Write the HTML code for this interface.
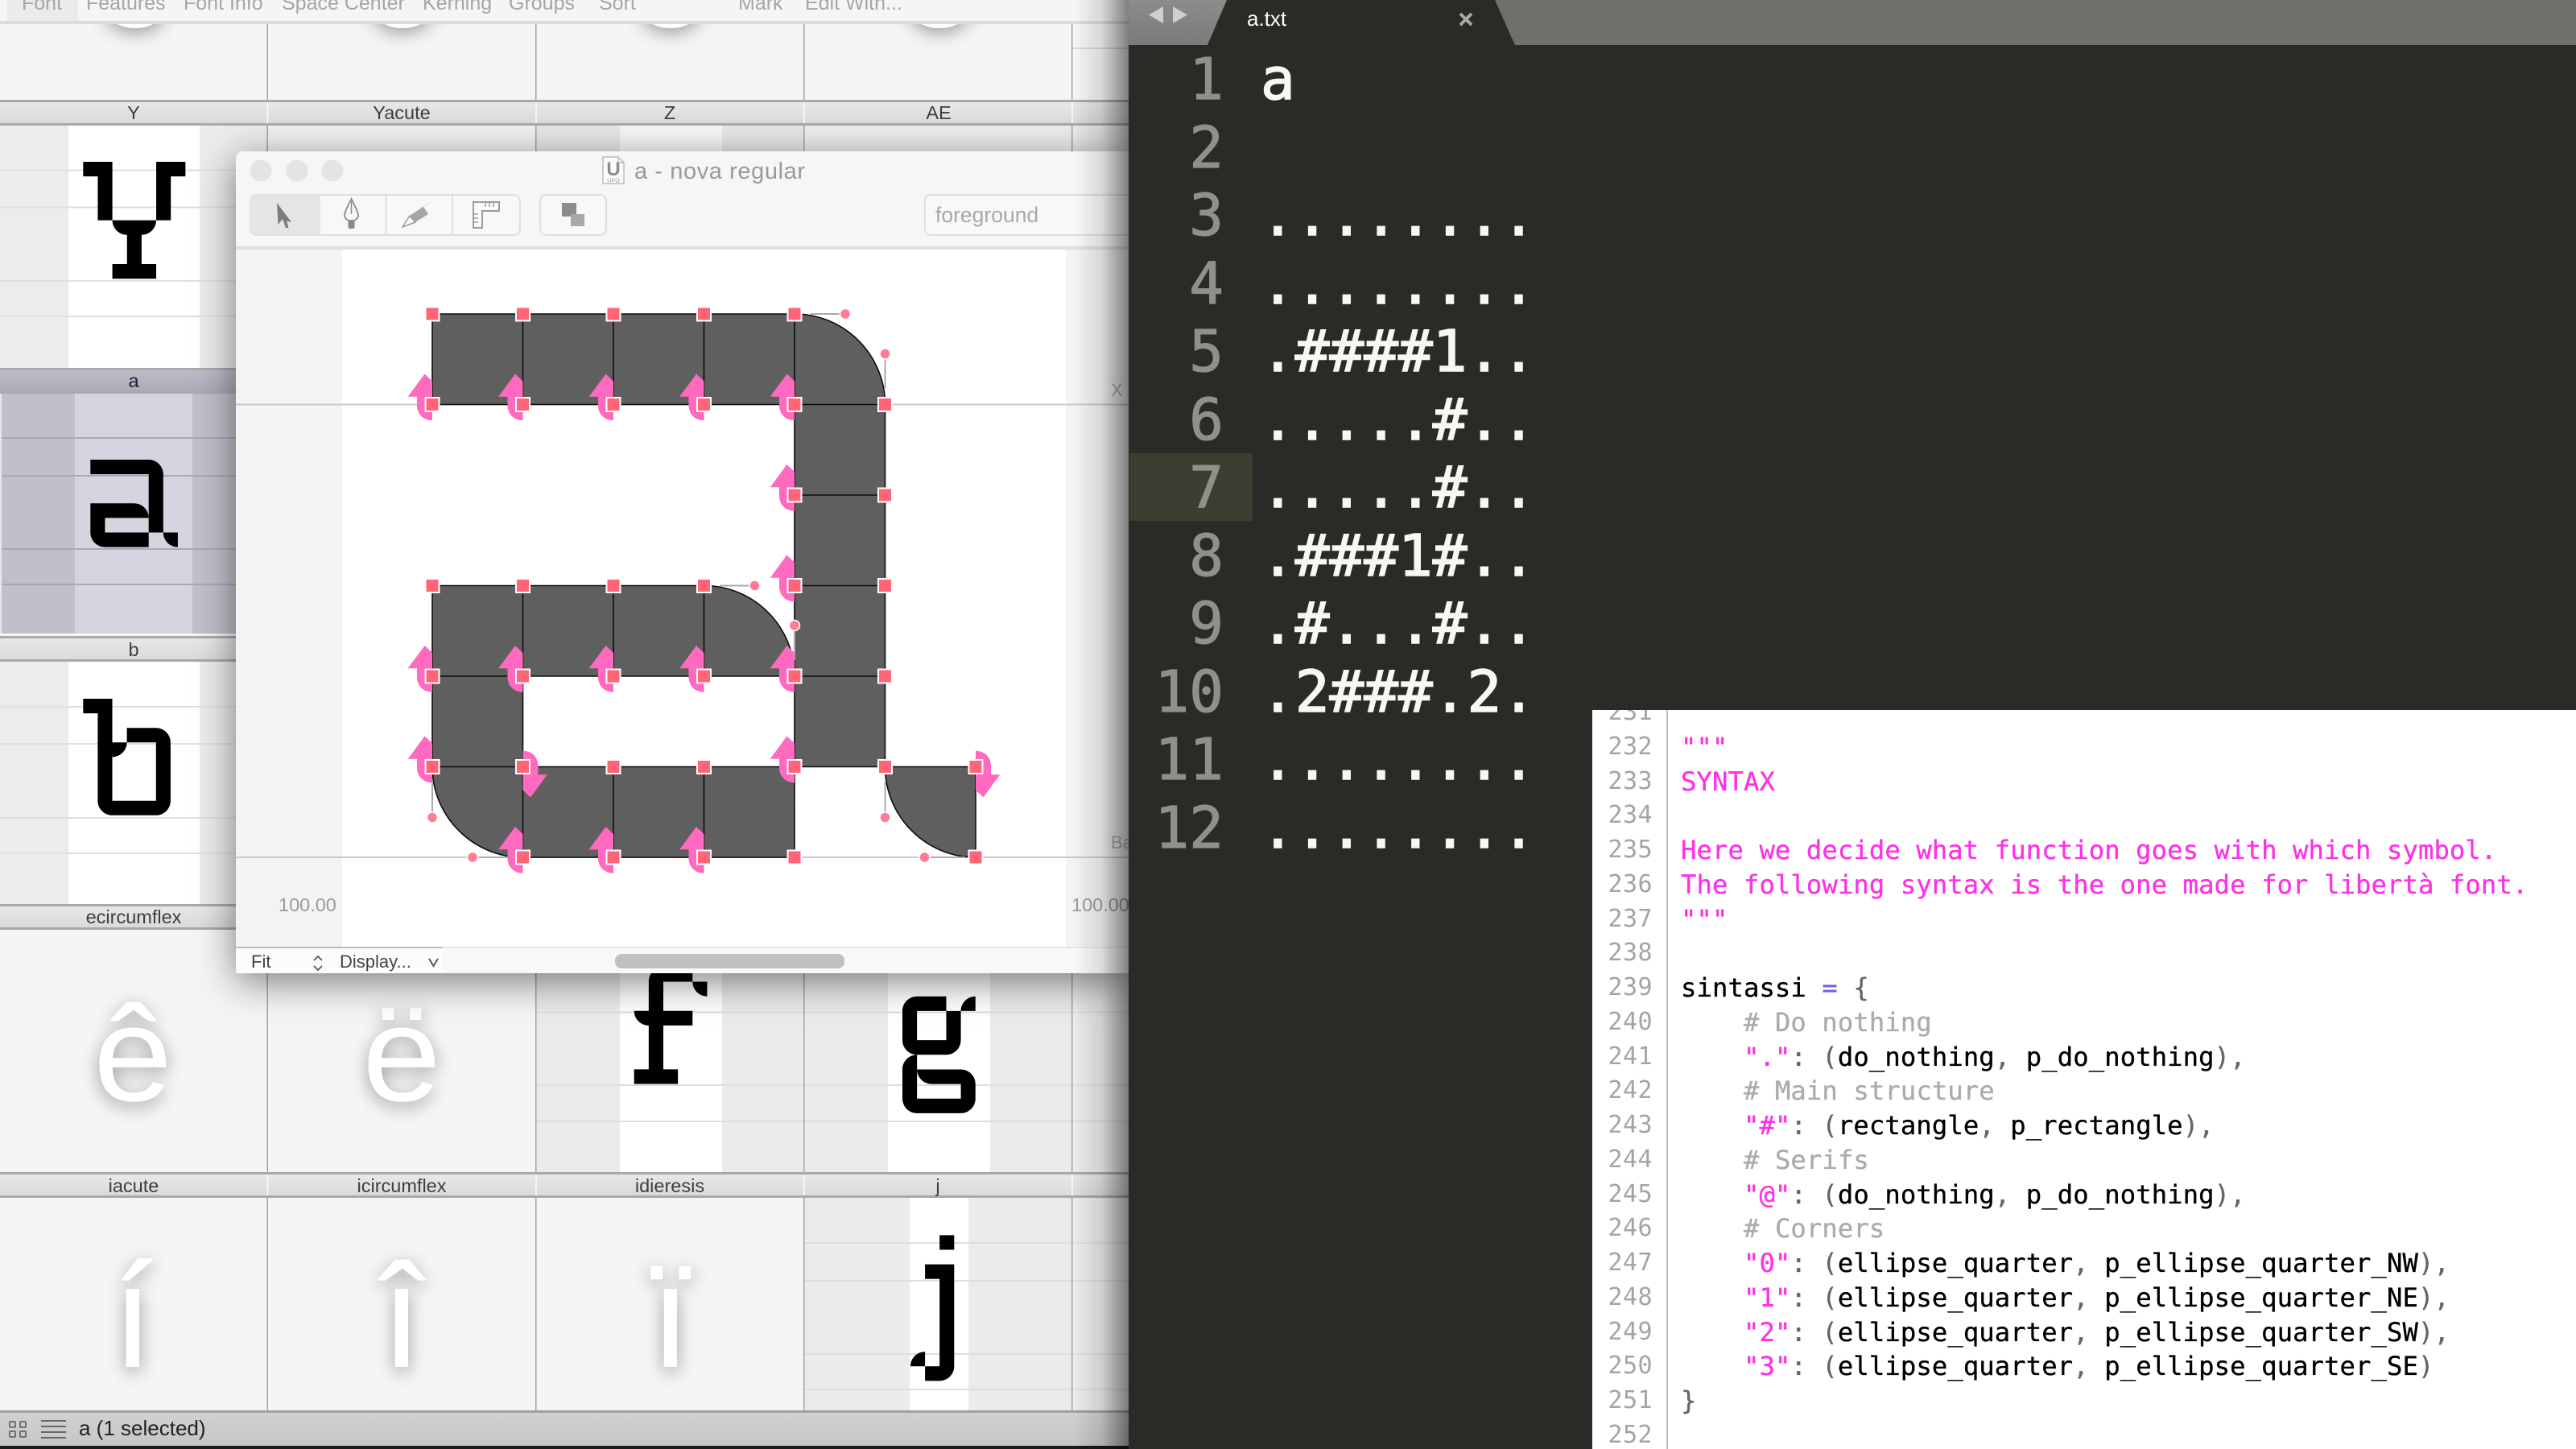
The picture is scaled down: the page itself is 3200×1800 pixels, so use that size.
<!DOCTYPE html>
<html><head><meta charset="utf-8"><title>a - nova regular</title>
<style>
html,body{margin:0;padding:0;width:3200px;height:1800px;overflow:hidden;background:#2a2b26}
svg{position:absolute;display:block}
text{font-family:"Liberation Sans",sans-serif}
#ed{position:absolute;left:1402px;top:0;width:1798px;height:1800px;background:#2a2b26;overflow:hidden}
.big{position:absolute;top:57px;margin:0;font:71px/84.5px "DejaVu Sans Mono",monospace;white-space:pre}
#hl{position:absolute;left:1px;top:563px;width:153px;height:84px;background:#3e3d32}
#nums{left:0;width:118px;text-align:right;color:#8f908a;-webkit-text-stroke:1.2px #8f908a}
#code{left:164px;color:#f8f8f2;-webkit-text-stroke:1.6px #f8f8f2}
#win{position:absolute;left:1978px;top:882px;width:1222px;height:918px;background:#fff;overflow:hidden}
#gut{position:absolute;left:0;top:-18px;width:75px;margin:0;text-align:right;font:30px/42.75px "DejaVu Sans Mono",monospace;letter-spacing:.44px;color:#a4a4a4;white-space:pre}
#bar{position:absolute;left:92px;top:0;width:2px;height:918px;background:#bdbdbd}
#src{position:absolute;left:110px;top:-18px;margin:0;font:32.2px/42.75px "DejaVu Sans Mono",monospace;letter-spacing:.11px;-webkit-text-stroke:.35px;color:#000;white-space:pre}
.s{color:#ff30e6}.c{color:#ababab}.p{color:#666}.q{color:#7a5fe0}
</style></head><body>
<svg width="1402" height="1800" viewBox="0 0 1402 1800" style="left:0;top:0">
<defs>
<filter id="ws" x="-20%" y="-20%" width="140%" height="140%"><feDropShadow dx="0" dy="10" stdDeviation="24" flood-color="#000" flood-opacity=".5"/></filter>
<filter id="gs" x="-60%" y="-60%" width="220%" height="220%"><feDropShadow dx="0" dy="6" stdDeviation="11" flood-color="#000" flood-opacity=".36"/></filter>
<linearGradient id="hd" x1="0" y1="0" x2="0" y2="1"><stop offset="0" stop-color="#e9e9e9"/><stop offset="1" stop-color="#d9d9d9"/></linearGradient>
<linearGradient id="hs" x1="0" y1="0" x2="0" y2="1"><stop offset="0" stop-color="#bcbcc7"/><stop offset="1" stop-color="#acacb9"/></linearGradient>
<linearGradient id="st" x1="0" y1="0" x2="0" y2="1"><stop offset="0" stop-color="#d2d2d2"/><stop offset="1" stop-color="#c6c6c6"/></linearGradient>
<linearGradient id="rs" x1="0" y1="0" x2="1" y2="0"><stop offset="0" stop-color="#000" stop-opacity="0"/><stop offset=".5" stop-color="#000" stop-opacity=".12"/><stop offset="1" stop-color="#000" stop-opacity=".48"/></linearGradient>
<g id="n"><rect x="-8.5" y="-8.5" width="17" height="17" fill="#ff6478" stroke="#fff" stroke-width="2"/></g>
<path id="ar" fill="#ff69c0" d="M-9.5-38L-30.3-9.7H-19V1C-19 12-11 19.7 0 19.7V-29z"/>
<g id="hdr"><rect width="1402" height="32" fill="url(#hd)"/><rect width="1402" height="3" fill="#a9a9a9"/><rect y="29" width="1402" height="3" fill="#a9a9a9"/></g>
</defs>

<!-- font overview background -->
<rect width="1402" height="1800" fill="#f5f5f5"/>

<!-- row 0 blobs -->
<g fill="#fff" filter="url(#gs)">
<ellipse cx="168" cy="8" rx="38" ry="27"/><ellipse cx="500" cy="8" rx="38" ry="27"/><ellipse cx="833" cy="8" rx="38" ry="27"/><ellipse cx="1167" cy="8" rx="38" ry="27"/>
</g>
<rect x="1333" y="59" width="69" height="2" fill="#d8d8d8"/>

<!-- top toolbar -->
<rect width="1402" height="27" fill="#f5f5f5"/>
<rect x="9" width="88" height="27" fill="#ebebeb"/>
<rect y="26" width="1402" height="4" fill="#dcdcdc"/>
<g font-size="25" fill="#a6a6a6">
<text x="27" y="12">Font</text><text x="107" y="12">Features</text><text x="228" y="12">Font Info</text><text x="350" y="12">Space Center</text><text x="525" y="12">Kerning</text><text x="632" y="12">Groups</text><text x="744" y="12">Sort</text><text x="917" y="12">Mark</text><text x="1000" y="12">Edit With...</text>
</g>

<!-- row 1 cells -->
<rect y="156" width="1402" height="301" fill="#ececec"/>
<rect x="85" y="156" width="163" height="301" fill="#fff"/>
<rect x="333" y="156" width="332" height="32" fill="#f1f1f1"/>
<rect x="666" y="156" width="332" height="32" fill="#e8e8e8"/>
<rect x="770" y="156" width="127" height="32" fill="#f8f8f8"/>
<rect x="999" y="156" width="332" height="32" fill="#eeeeee"/>
<g fill="#dfdfdf"><rect y="210.500" width="332" height="2"/><rect y="256.500" width="332" height="2"/><rect y="348" width="332" height="2"/><rect y="392" width="332" height="2"/></g>
<path transform="translate(103.300 201) scale(18.150)" d="M0 0h2v1h-2zM5 0h2v1h-2zM1 1h1v3h-1zM5 1h1v3h-1zM2 4c0 .55 .45 1 1 1v-1zM3 4h1v1h-1zM5 4c0 .55-.45 1-1 1v-1zM3 5h1v2h-1zM2 7h3v1h-3z"/>

<!-- row 2 a selected -->
<rect y="489" width="332" height="298" fill="#c0c0ca"/>
<rect x="93" y="489" width="146" height="298" fill="#d5d5df"/>
<g fill="#a9a9b5"><rect y="543" width="332" height="2"/><rect y="590" width="332" height="2"/><rect y="681" width="332" height="2"/><rect y="725" width="332" height="2"/></g>
<path transform="translate(112.300 571) scale(18.100)" d="M0 0h4v1h-4zM4 0c.55 0 1 .45 1 1h-1zM4 1h1v4h-1zM0 3h3v1h-3zM3 3c.55 0 1 .45 1 1h-1zM0 4h1v1h-1zM0 5c0 .55 .45 1 1 1v-1zM1 5h3v1h-3zM5 5c0 .55 .45 1 1 1v-1z"/>
<rect y="489" width="2" height="298" fill="#e8e8ec"/>

<!-- row 3 b -->
<rect y="822" width="332" height="301" fill="#ececec"/>
<rect x="85" y="822" width="163" height="301" fill="#fff"/>
<g fill="#dfdfdf"><rect y="877" width="332" height="2"/><rect y="923" width="332" height="2"/><rect y="1015" width="332" height="2"/><rect y="1059" width="332" height="2"/></g>
<path transform="translate(103.300 868) scale(18.100)" d="M0 0h2v1h-2zM1 1h1v6h-1zM3 2h2v1h-2zM5 2c.55 0 1 .45 1 1h-1zM3 3c0 .55-.45 1-1 1v-1zM5 3h1v4h-1zM1 7c0 .55 .45 1 1 1v-1zM2 7h3v1h-3zM6 7c0 .55-.45 1-1 1v-1z"/>

<!-- row 4 -->
<rect x="666" y="1155" width="736" height="301" fill="#ebebeb"/>
<rect x="770" y="1155" width="127" height="301" fill="#fff"/>
<rect x="1103" y="1155" width="127" height="301" fill="#fff"/>
<g fill="#dedede"><rect x="666" y="1256.500" width="736" height="2"/><rect x="666" y="1347" width="736" height="2"/><rect x="666" y="1392" width="736" height="2"/></g>
<path transform="translate(787.700 1201.300) scale(18.150)" d="M2 0c-.55 0-1 .45-1 1h1zM2 0h2v1h-2zM1 1h1v2h-1zM4 1c0 .55 .45 1 1 1v-1zM0 3c0 .55 .45 1 1 1v-1zM1 3h3v1h-3zM1 4h1v3h-1zM0 7h3v1h-3z"/>
<path transform="translate(1121 1237.700) scale(18.150)" d="M1 0c-.55 0-1 .45-1 1h1zM1 0h2v1h-2zM5 0c-.55 0-1 .45-1 1h1zM0 1h1v2h-1zM3 1h1v2h-1zM0 3c0 .55 .45 1 1 1v-1zM1 3h2v1h-2zM4 3c0 .55-.45 1-1 1v-1zM1 4c-.55 0-1 .45-1 1h1zM0 5h1v2h-1zM1 5c0 .55 .45 1 1 1v-1zM2 5h2v1h-2zM4 5c.55 0 1 .45 1 1h-1zM4 6h1v1h-1zM0 7c0 .55 .45 1 1 1v-1zM1 7h3v1h-3zM5 7c0 .55-.45 1-1 1v-1z"/>

<!-- row 5 -->
<rect x="999" y="1488" width="403" height="264" fill="#ebebeb"/>
<rect x="1130" y="1488" width="73" height="264" fill="#fff"/>
<g fill="#dedede"><rect x="999" y="1543" width="403" height="2"/><rect x="999" y="1590" width="403" height="2"/><rect x="999" y="1681" width="403" height="2"/><rect x="999" y="1725" width="403" height="2"/></g>
<path transform="translate(1131 1534.400) scale(18.100)" d="M2 0h1v1h-1zM1 2h2v1h-2zM2 3h1v6h-1zM1 8c-.55 0-1 .45-1 1h1zM1 9h1v1h-1zM3 9c0 .55-.45 1-1 1v-1z"/>

<!-- column lines -->
<g fill="#a3a3a3">
<rect x="331.500" y="30" width="1.500" height="1722"/><rect x="665" y="30" width="1.500" height="1722"/><rect x="998" y="30" width="1.500" height="1722"/><rect x="1331" y="30" width="1.500" height="1722"/>
</g>

<!-- headers -->
<use href="#hdr" y="124"/><use href="#hdr" y="457"/><use href="#hdr" y="790"/><use href="#hdr" y="1123"/><use href="#hdr" y="1456"/>
<rect y="460" width="332" height="26" fill="url(#hs)"/>
<g fill="#fafafa" opacity=".8">
<rect x="331.500" y="127" width="2" height="26"/><rect x="665" y="127" width="2" height="26"/><rect x="998" y="127" width="2" height="26"/><rect x="1331" y="127" width="2" height="26"/>
<rect x="331.500" y="1459" width="2" height="26"/><rect x="665" y="1459" width="2" height="26"/><rect x="998" y="1459" width="2" height="26"/><rect x="1331" y="1459" width="2" height="26"/>
</g>
<g font-size="23.500" fill="#3d3d46" text-anchor="middle">
<text x="166" y="148">Y</text><text x="499" y="148">Yacute</text><text x="832" y="148">Z</text><text x="1166" y="148">AE</text>
<text x="166" y="481" fill="#1e1e32">a</text>
<text x="166" y="815">b</text>
<text x="166" y="1147">ecircumflex</text>
<text x="166" y="1481">iacute</text><text x="499" y="1481">icircumflex</text><text x="832" y="1481">idieresis</text><text x="1165" y="1481">j</text>
</g>

<!-- white accented glyphs -->
<g fill="#fff" text-anchor="middle" filter="url(#gs)">
<text transform="translate(165 1367) scale(1.1 1.05)" font-size="160">ê</text>
<text transform="translate(499 1367) scale(1.1 1.05)" font-size="160">ë</text>
<text x="165" y="1698" font-size="183">í</text>
<text x="499" y="1698" font-size="183">î</text>
<text x="833" y="1698" font-size="183">ï</text>
</g>

<!-- status bar -->
<rect y="1752" width="1402" height="44" fill="url(#st)"/>
<rect y="1752" width="1402" height="3" fill="#a0a0a0"/>
<rect y="1796" width="1402" height="4" fill="#1a1a1a"/>
<g fill="none" stroke="#666" stroke-width="1.800">
<rect x="12" y="1766" width="7" height="7" rx="1"/><rect x="25" y="1766" width="7" height="7" rx="1"/><rect x="12" y="1778" width="7" height="7" rx="1"/><rect x="25" y="1778" width="7" height="7" rx="1"/>
</g>
<g fill="#666"><rect x="51" y="1764" width="31" height="2"/><rect x="51" y="1771" width="31" height="2"/><rect x="51" y="1778" width="31" height="2"/><rect x="51" y="1785" width="31" height="2"/></g>
<text x="98" y="1783" font-size="26" fill="#222">a (1 selected)</text>

<!-- glyph window -->
<g filter="url(#ws)">
<path d="M303 188H1402V1209H303q-10 0-10-10V198q0-10 10-10z" fill="#f6f6f6"/>
</g>
<circle cx="324" cy="212" r="13.500" fill="#e4e4e4"/><circle cx="369" cy="212" r="13.500" fill="#e4e4e4"/><circle cx="413" cy="212" r="13.500" fill="#e4e4e4"/>

<!-- UFO doc icon + title -->
<path d="M749 195h19l7 7v26h-26z" fill="#fbfbfb" stroke="#bbb" stroke-width="1.500"/>
<path d="M768 195v7h7" fill="none" stroke="#bbb" stroke-width="1.500"/>
<text x="762" y="218" font-size="24" font-weight="bold" fill="#8c8c8c" text-anchor="middle">U</text>
<text x="762" y="226.500" font-size="7.500" fill="#999" text-anchor="middle">UFO</text>
<text x="788" y="222" font-size="29" fill="#9a9a9a" textLength="212">a - nova regular</text>

<!-- toolbar -->
<rect x="311" y="242" width="335" height="50" rx="8" fill="#f8f8f8" stroke="#dedede" stroke-width="2"/>
<path d="M319 242h79v50h-79q-8 0-8-8v-34q0-8 8-8z" fill="#e5e5e5"/>
<path d="M479.500 243v48M562 243v48" stroke="#dedede" stroke-width="2"/>
<path d="M344 252L362 276L356 274.500L358.500 283L355 283L351 272L345.500 279z" fill="#7c7c7c"/>
<path d="M436.500 247C431 258 428 264 428 268C428 271 431 273 433 274H440C442 273 445 271 445 268C445 264 442 258 436.500 247z" fill="none" stroke="#8a8a8a" stroke-width="1.800"/>
<path d="M436.500 250V266" stroke="#8a8a8a" stroke-width="1.500"/><rect x="432.500" y="274" width="8" height="10" rx="2" fill="#8a8a8a"/>
<path d="M540 247L526 257L532 266L516 276L509 268z" fill="#a6a6a6"/>
<path d="M500 282L509 268L516 276z" fill="#f8f8f8" stroke="#9a9a9a" stroke-width="1.500"/>
<path d="M588 251H620V262H599V283H588z" fill="#fbfbfb" stroke="#9c9c9c" stroke-width="2"/>
<path d="M603 252v5M608 252v5M613 252v5M589 266h5M589 271h5M589 276h5" stroke="#9c9c9c" stroke-width="1.500"/>
<rect x="671" y="242" width="82" height="50" rx="8" fill="#f8f8f8" stroke="#dedede" stroke-width="2"/>
<rect x="698" y="252" width="18" height="17" fill="#8c8c8c"/><rect x="709" y="266" width="17" height="15" fill="#a8a8a8"/>
<path d="M1402 242H1157q-8 0-8 8v34q0 8 8 8H1402" fill="#f8f8f8" stroke="#dedede" stroke-width="2"/>
<text x="1162" y="276" font-size="26.500" fill="#a8a8a8">foreground</text>
<rect x="293" y="306" width="1109" height="4" fill="#dedede"/>

<!-- canvas -->
<rect x="293" y="310" width="1109" height="866" fill="#f3f3f3"/>
<rect x="425" y="310" width="899" height="866" fill="#fff"/>
<g fill="#c9c9c9"><rect x="293" y="501.500" width="1109" height="2"/><rect x="293" y="1064" width="1109" height="2"/></g>
<text x="346" y="1132" font-size="23.500" fill="#9b9b9b">100.00</text>
<text x="1331" y="1132" font-size="23.500" fill="#9b9b9b">100.00</text>
<text x="1380" y="492" font-size="22" fill="#b0b0b0">X</text>
<text x="1380" y="1054" font-size="22" fill="#b0b0b0">Ba</text>

<!-- outline cells -->
<path transform="translate(537 390) scale(112.500)" fill="#5f5f5f" stroke="#0d0d0d" stroke-width="1.600" vector-effect="non-scaling-stroke" d="M0 0h1v1h-1zM1 0h1v1h-1zM2 0h1v1h-1zM3 0h1v1h-1zM4 0c.55 0 1 .45 1 1h-1zM4 1h1v1h-1zM4 2h1v1h-1zM0 3h1v1h-1zM1 3h1v1h-1zM2 3h1v1h-1zM3 3c.55 0 1 .45 1 1h-1zM4 3h1v1h-1zM0 4h1v1h-1zM4 4h1v1h-1zM0 5c0 .55 .45 1 1 1v-1zM1 5h1v1h-1zM2 5h1v1h-1zM3 5h1v1h-1zM5 5c0 .55 .45 1 1 1v-1z"/>

<g transform="translate(537 390)">
<!-- bezier handles -->
<g stroke="#aaa" stroke-width="2" fill="none">
<path d="M470 0h43M562.500 92v-43M357 337.500h43M450 430v-43M0 582v43M100 675H50M562.500 582v43M662 675H612"/>
</g>
<g fill="#ff7c92" stroke="#fff" stroke-width="1.500">
<circle cx="513" cy="0" r="6.500"/><circle cx="562.500" cy="49.500" r="6.500"/><circle cx="400.500" cy="337.500" r="6.500"/><circle cx="450" cy="387" r="6.500"/><circle cx="0" cy="625.500" r="6.500"/><circle cx="50" cy="675" r="6.500"/><circle cx="562.500" cy="625.500" r="6.500"/><circle cx="611.500" cy="675" r="6.500"/>
</g>
<!-- direction arrows -->
<use href="#ar" x="0" y="112.500"/><use href="#ar" x="112.500" y="112.500"/><use href="#ar" x="225" y="112.500"/><use href="#ar" x="337.500" y="112.500"/><use href="#ar" x="450" y="112.500"/>
<use href="#ar" x="450" y="225"/><use href="#ar" x="450" y="337.500"/>
<use href="#ar" x="0" y="450"/><use href="#ar" x="112.500" y="450"/><use href="#ar" x="225" y="450"/><use href="#ar" x="337.500" y="450"/><use href="#ar" x="450" y="450"/>
<use href="#ar" x="0" y="562.500"/><use href="#ar" x="450" y="562.500"/>
<use href="#ar" x="112.500" y="675"/><use href="#ar" x="225" y="675"/><use href="#ar" x="337.500" y="675"/>
<use href="#ar" transform="translate(112.500 562.500) rotate(180)"/>
<use href="#ar" transform="translate(675 562.500) rotate(180)"/>
<!-- nodes -->
<use href="#n" x="0" y="0"/><use href="#n" x="112.500" y="0"/><use href="#n" x="225" y="0"/><use href="#n" x="337.500" y="0"/><use href="#n" x="450" y="0"/>
<use href="#n" x="0" y="112.500"/><use href="#n" x="112.500" y="112.500"/><use href="#n" x="225" y="112.500"/><use href="#n" x="337.500" y="112.500"/><use href="#n" x="450" y="112.500"/><use href="#n" x="562.500" y="112.500"/>
<use href="#n" x="450" y="225"/><use href="#n" x="562.500" y="225"/>
<use href="#n" x="0" y="337.500"/><use href="#n" x="112.500" y="337.500"/><use href="#n" x="225" y="337.500"/><use href="#n" x="337.500" y="337.500"/><use href="#n" x="450" y="337.500"/><use href="#n" x="562.500" y="337.500"/>
<use href="#n" x="0" y="450"/><use href="#n" x="112.500" y="450"/><use href="#n" x="225" y="450"/><use href="#n" x="337.500" y="450"/><use href="#n" x="450" y="450"/><use href="#n" x="562.500" y="450"/>
<use href="#n" x="0" y="562.500"/><use href="#n" x="112.500" y="562.500"/><use href="#n" x="225" y="562.500"/><use href="#n" x="337.500" y="562.500"/><use href="#n" x="450" y="562.500"/><use href="#n" x="562.500" y="562.500"/><use href="#n" x="675" y="562.500"/>
<use href="#n" x="112.500" y="675"/><use href="#n" x="225" y="675"/><use href="#n" x="337.500" y="675"/><use href="#n" x="450" y="675"/><use href="#n" x="675" y="675"/>
</g>

<!-- window bottom bar -->
<rect x="293" y="1176" width="1109" height="33" fill="#f8f8f8"/>
<path d="M293 1176H549V1209H303q-10 0-10-10z" fill="#fcfcfc"/>
<rect x="293" y="1176" width="256" height="2" fill="#bdbdbd"/>
<rect x="549" y="1176" width="853" height="2" fill="#e6e6e6"/>
<text x="312" y="1202" font-size="22" fill="#444">Fit</text>
<path d="M390 1193l5-5 5 5M390 1200l5 5 5-5" fill="none" stroke="#555" stroke-width="1.800"/>
<text x="422" y="1202" font-size="22" fill="#444">Display...</text>
<path d="M533 1191l5.500 9 5.500-9" fill="none" stroke="#555" stroke-width="2"/>
<rect x="764" y="1185" width="285" height="18" rx="8" fill="#c0c0c0"/>

<!-- shadow cast by the editor on the left -->
<rect x="1335" width="67" height="1800" fill="url(#rs)"/>
</svg>

<div id="ed">
<svg width="1798" height="56" viewBox="0 0 1798 56" style="left:0;top:0">
<defs><linearGradient id="tl" x1="0" y1="0" x2="0" y2="1"><stop offset="0" stop-color="#8c8c8a"/><stop offset="1" stop-color="#7a7a78"/></linearGradient></defs>
<rect width="1798" height="56" fill="#6f706c"/>
<path d="M0 0H122L98 56H0z" fill="url(#tl)"/>
<path d="M122 0H455L480 56H98z" fill="#2a2b26"/>
<path d="M25 18.500L43 8V29z" fill="#cfcfcf"/>
<path d="M55 8L73 18.500 55 29z" fill="#cfcfcf"/>
<text x="147" y="32" font-size="26" fill="#fff">a.txt</text>
<path d="M412 17L426 31M426 17L412 31" stroke="#a8a8a8" stroke-width="4"/>
</svg>
<div id="hl"></div>
<pre id="nums" class="big">1
2
3
4
5
6
7
8
9
10
11
12</pre>
<pre id="code" class="big">a

........
........
.####1..
.....#..
.....#..
.###1#..
.#...#..
.2###.2.
........
........</pre>
</div>

<div id="win">
<pre id="gut">231
232
233
234
235
236
237
238
239
240
241
242
243
244
245
246
247
248
249
250
251
252</pre>
<div id="bar"></div>
<pre id="src">

<span class="s">"""</span>
<span class="s">SYNTAX</span>

<span class="s">Here we decide what function goes with which symbol.</span>
<span class="s">The following syntax is the one made for libertà font.</span>
<span class="s">"""</span>

sintassi <span class="q">=</span> <span class="p">{</span>
    <span class="c"># Do nothing</span>
    <span class="s">"."</span><span class="p">: (</span>do_nothing<span class="p">,</span> p_do_nothing<span class="p">),</span>
    <span class="c"># Main structure</span>
    <span class="s">"#"</span><span class="p">: (</span>rectangle<span class="p">,</span> p_rectangle<span class="p">),</span>
    <span class="c"># Serifs</span>
    <span class="s">"@"</span><span class="p">: (</span>do_nothing<span class="p">,</span> p_do_nothing<span class="p">),</span>
    <span class="c"># Corners</span>
    <span class="s">"0"</span><span class="p">: (</span>ellipse_quarter<span class="p">,</span> p_ellipse_quarter_NW<span class="p">),</span>
    <span class="s">"1"</span><span class="p">: (</span>ellipse_quarter<span class="p">,</span> p_ellipse_quarter_NE<span class="p">),</span>
    <span class="s">"2"</span><span class="p">: (</span>ellipse_quarter<span class="p">,</span> p_ellipse_quarter_SW<span class="p">),</span>
    <span class="s">"3"</span><span class="p">: (</span>ellipse_quarter<span class="p">,</span> p_ellipse_quarter_SE<span class="p">)</span>
<span class="p">}</span>
</pre>
</div>
</body></html>
